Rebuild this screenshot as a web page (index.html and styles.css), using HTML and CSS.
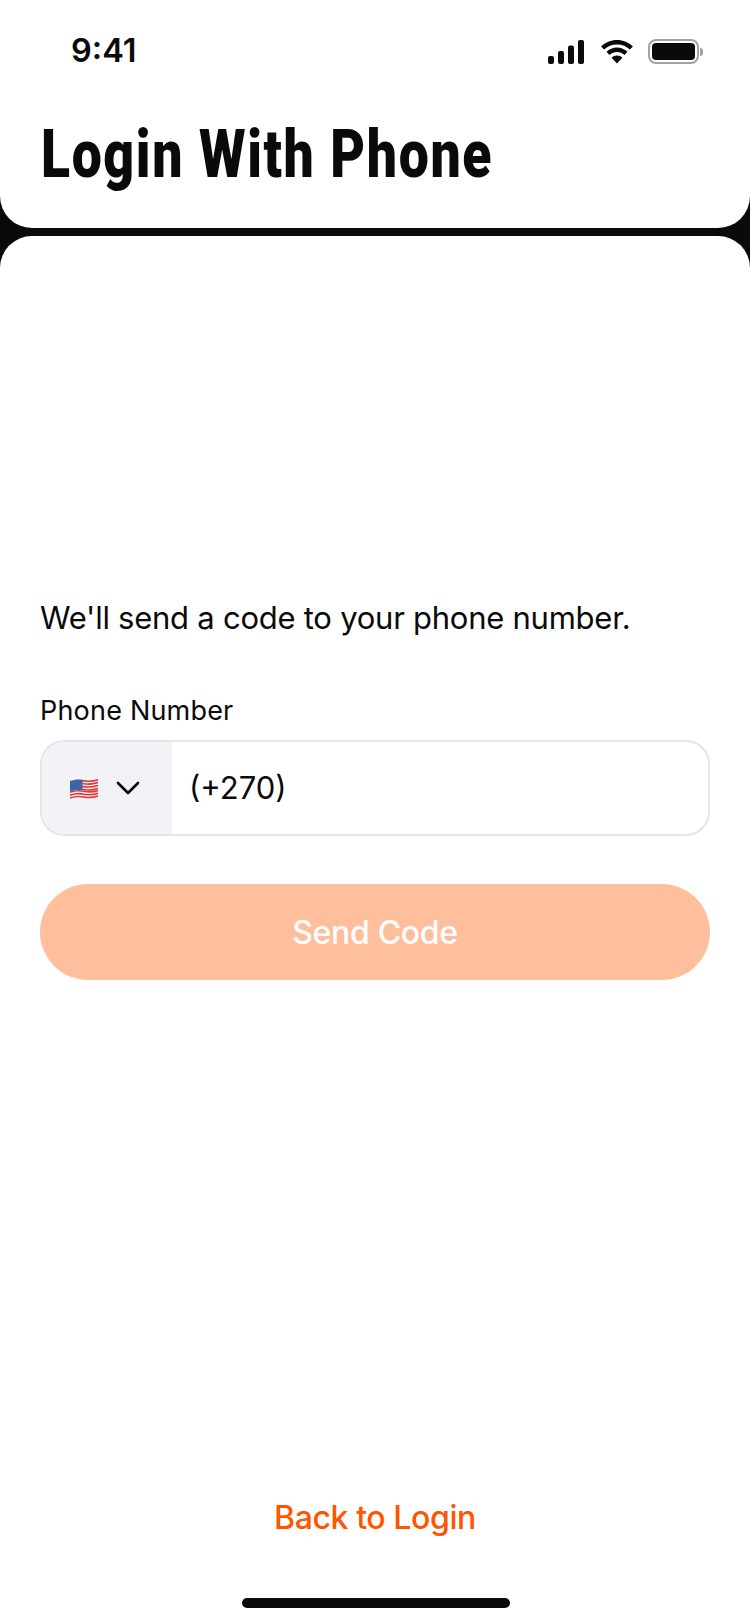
FILE: index.html
```html
<!DOCTYPE html>
<html lang="en">
<head>
<meta charset="utf-8">
<title>Login With Phone</title>
<link rel="stylesheet" href="styles.css">
</head>
<body>
<div class="screen">
  <header class="header">
    <div class="status">
      <span class="time">9:41</span>
      <div class="status-icons">
        <svg class="sig" width="36" height="24" viewBox="0 0 36 24"><rect x="0" y="16" width="6" height="8" rx="2"/><rect x="10" y="11" width="6" height="13" rx="2"/><rect x="20" y="5.500" width="6" height="18.500" rx="2"/><rect x="30" y="0" width="6" height="24" rx="2"/></svg>
        <svg class="wifi" width="34" height="24" viewBox="0 0 34 24"><path d="M17 4.500c5 0 9.500 1.900 12.900 5.100l3-3.100C28.700 2.500 23.100 0 17 0S5.300 2.500 1.100 6.500l3 3.100C7.500 6.400 12 4.500 17 4.500z"/><path d="M17 12c2.900 0 5.500 1.100 7.500 3l3-3.200C24.700 9.200 21 7.600 17 7.600s-7.700 1.600-10.500 4.200l3 3.200c2-1.900 4.600-3 7.500-3z"/><path d="M17 15.500c-2.100 0-4 .8-5.400 2.200L17 23.500l5.400-5.800c-1.400-1.400-3.300-2.200-5.400-2.200z"/></svg>
        <div class="battery"><div class="battery-body"><div class="battery-fill"></div></div><div class="battery-cap"></div></div>
      </div>
    </div>
    <h1 class="title"><span class="title-text">Login With Phone</span></h1>
  </header>
  <main class="panel">
    <p class="lead">We'll send a code to your phone number.</p>
    <label class="label">Phone Number</label>
    <div class="phone">
      <div class="country">
        <svg class="flag" width="30" height="22" viewBox="0 0 30 22">
          <path d="M1 4c5-2 9-2 14-1s9 1 14-1v17c-5 2-9 2-14 1s-9-1-14 1z" fill="#f6f2f2"/>
          <g fill="none" stroke="#dc3a3e" stroke-width="1.600">
            <path d="M13 3.600c5 .9 11 .9 16-.9"/>
            <path d="M13 6.500c5 .9 11 .9 16-.9"/>
            <path d="M13 9.400c5 .9 11 .9 16-.9"/>
            <path d="M13 12.300c5 .9 11 .9 16-.9"/>
            <path d="M1 15.300c5-1.800 9-2 14-1s9 .9 14-.9"/>
            <path d="M1 18.200c5-1.800 9-2 14-1s9 .9 14-.9"/>
            <path d="M1 21c5-1.800 9-2 14-1s9 .9 14-.9"/>
          </g>
          <path d="M1 4c4-1.600 8-1.900 12.500-1.300v10.500C9 12.600 5 13 1 14.500z" fill="#3d64a6"/>
        </svg>
        <svg class="chev" width="24" height="14" viewBox="0 0 24 14"><path d="M2 2l10 10L22 2" fill="none" stroke="#0a0a0a" stroke-width="2.600" stroke-linecap="round" stroke-linejoin="round"/></svg>
      </div>
      <span class="phone-value">(+270)</span>
    </div>
    <button class="send" type="button">Send Code</button>
    <div class="spacer"></div>
    <a class="back">Back to Login</a>
    <div class="home"></div>
  </main>
</div>
</body>
</html>
```
FILE: styles.css
```css
* { box-sizing: border-box; }
html, body { margin: 0; padding: 0; }
body { background: #0a0a0a; font-family: Inter, "Noto Sans", sans-serif; color: #0a0a0a; }
.screen { width: 750px; height: 1624px; display: flex; flex-direction: column; gap: 8px; background: #0a0a0a; overflow: hidden; }
.header { height: 228px; flex: none; background: #fff; border-radius: 0 0 32px 32px; padding: 0 40px; }
.status { height: 114px; display: flex; justify-content: space-between; align-items: flex-start; padding: 31px 7px 0 31px; }
.time { font: 600 32.500px/40px Inter, sans-serif; letter-spacing: 0; }
.status-icons { display: flex; align-items: center; padding-top: 8px; }
.status-icons svg { fill: #0a0a0a; display: block; }
.wifi { margin: 0 14px 0 16px; }
.battery { display: flex; align-items: center; gap: 1px; }
.battery-body { width: 51px; height: 25px; border: 2px solid #a3a3a3; border-radius: 8px; padding: 2px; }
.battery-fill { width: 100%; height: 100%; background: #0a0a0a; border-radius: 4px; }
.battery-cap { width: 3px; height: 8px; background: #a3a3a3; border-radius: 0 3px 3px 0; }
.title { margin: 0; height: 80px; padding-left: 1px; font: 900 67px/80px Roboto, sans-serif; color: #0a0a0a; }
.title-text { display: inline-block; transform: scaleX(.8); transform-origin: left center; white-space: nowrap; letter-spacing: 2px; }
.panel { flex: 1; background: #fff; border-radius: 32px 32px 0 0; padding: 360px 40px 16px; display: flex; flex-direction: column; }
.lead { margin: 0; font: 400 31px/44px Inter, sans-serif; letter-spacing: -.25px; color: #0a0a0a; }
.label { margin-top: 53px; font: 400 27px/36px Inter, sans-serif; letter-spacing: .2px; color: #0a0a0a; }
.phone { margin-top: 11px; height: 96px; border: 2px solid #e4e4ea; border-radius: 24px; display: flex; align-items: center; overflow: hidden; }
.country { width: 130px; height: 100%; background: #f2f2f7; display: flex; align-items: center; gap: 17px; padding-left: 27px; }
.flag, .chev { display: block; flex: none; }
.phone-value { margin-left: 17px; font: 400 31px/44px Inter, sans-serif; }
.send { margin-top: 48px; height: 96px; padding: 2px 0 0; border: 0; border-radius: 48px; background: #ffbe9c; color: #fff; font: 500 32px/44px Inter, sans-serif; letter-spacing: -.3px; }
.spacer { flex: 1; }
.back { align-self: center; color: #ff5500; font: 500 32px/44px Inter, sans-serif; letter-spacing: -.4px; }
.home { margin: 58px 0 0 2px; align-self: center; width: 268px; height: 10px; background: #0a0a0a; border-radius: 5px; }
```
